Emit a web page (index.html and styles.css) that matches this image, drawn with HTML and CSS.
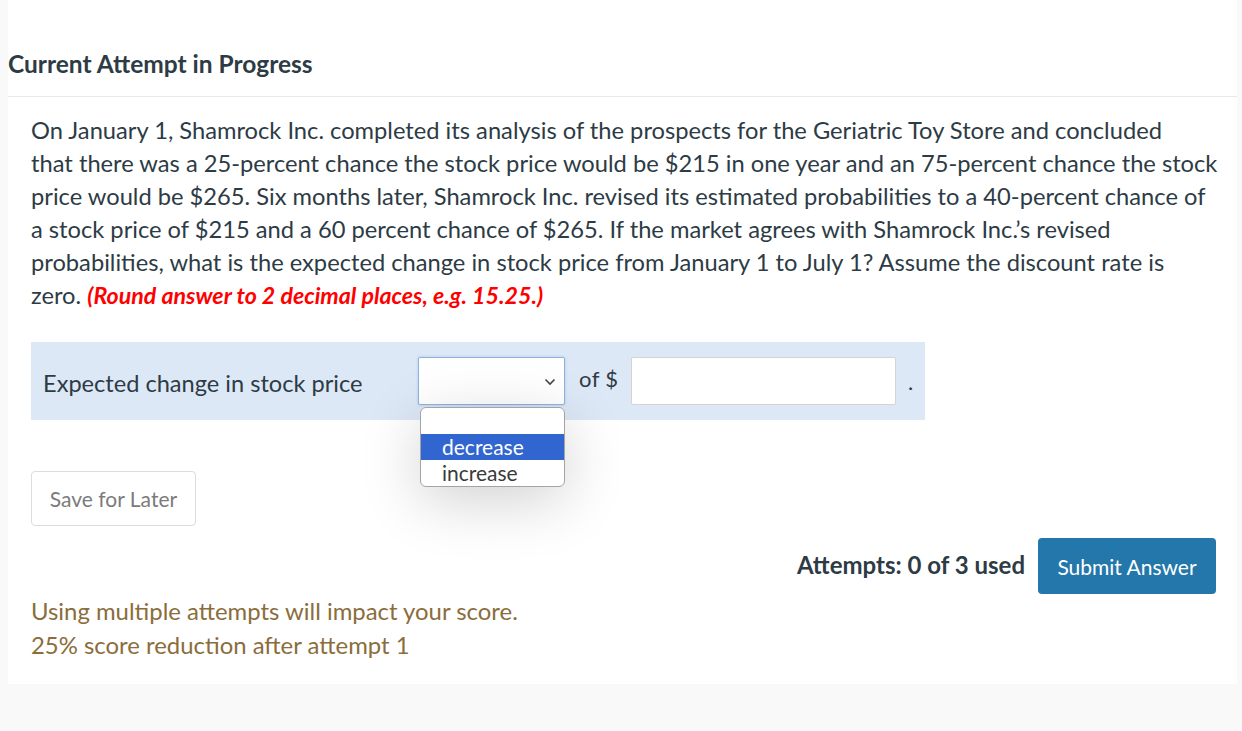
FILE: index.html
```html
<!DOCTYPE html>
<html>
<head>
<meta charset="utf-8">
<link rel="stylesheet" href="styles.css">
</head>
<body>
<div class="card">
  <h2 class="title">Current Attempt in Progress</h2>
  <div class="content">
    <p class="question">On January 1, Shamrock Inc. completed its analysis of the prospects for the Geriatric Toy Store and concluded<br>that there was a 25-percent chance the stock price would be $215 in one year and an 75-percent chance the stock<br>price would be $265. Six months later, Shamrock Inc. revised its estimated probabilities to a 40-percent chance of<br>a stock price of $215 and a 60 percent chance of $265. If the market agrees with Shamrock Inc.’s revised<br>probabilities, what is the expected change in stock price from January 1 to July 1? Assume the discount rate is<br>zero. <span class="hint">(Round answer to 2 decimal places, e.g. 15.25.)</span></p>

    <div class="answer-row">
      <span class="label">Expected change in stock price</span>
      <div class="select-wrap">
        <div class="select">
          <svg class="chev" width="12" height="8" viewBox="0 0 12 8"><path d="M1.5 1.5 L6 6 L10.5 1.5" fill="none" stroke="#444" stroke-width="1.6"/></svg>
        </div>
        <div class="menu">
          <div class="opt"></div>
          <div class="opt sel">decrease</div>
          <div class="opt">increase</div>
        </div>
      </div>
      <span class="of">of $</span>
      <div class="input"></div>
      <span class="dot">.</span>
    </div>

    <button class="save">Save for Later</button>

    <div class="submit-row">
      <span class="attempts">Attempts: 0 of 3 used</span>
      <button class="submit">Submit Answer</button>
    </div>

    <p class="warn">Using multiple attempts will impact your score.<br>25% score reduction after attempt 1</p>
  </div>
</div>
</body>
</html>
```

FILE: styles.css
```css
html, body {
  margin: 0;
  padding: 0;
  background: #f9f9f9;
  font-family: Lato, "Open Sans", sans-serif;
  color: #2d3b45;
}
body {
  padding: 0 5px 0 8px;
  height: 731px;
  box-sizing: border-box;
}
.card {
  background: #fff;
  padding-bottom: 22px;
}
.title {
  margin: 0;
  font-size: 24.5px;
  font-weight: 700;
  line-height: 28px;
  padding: 50px 0 18px 0;
  border-bottom: 1px solid #e8e8e8;
  color: #2d3b45;
}
.content {
  padding: 0 21px 0 23px;
}
.question {
  margin: 0;
  padding-top: 17px;
  font-size: 23.7px;
  line-height: 33px;
  white-space: nowrap;
}
.hint {
  color: #ff0000;
  font-weight: 700;
  font-style: italic;
  font-size: 23.2px;
}
.answer-row {
  margin-top: 30px;
  width: 894px;
  height: 78px;
  box-sizing: border-box;
  background: #dde8f6;
  display: flex;
  align-items: center;
  padding-left: 12px;
  font-size: 22px;
}
.label {
  width: 375px;
  font-size: 23.6px;
  margin-top: 4px;
}
.select-wrap {
  position: relative;
}
.select {
  width: 147px;
  height: 48px;
  box-sizing: border-box;
  background: #fff;
  border: 1px solid #8fb3e0;
  border-radius: 2px;
  box-shadow: 0 0 3px rgba(80, 140, 220, 0.35);
  position: relative;
}
.chev {
  position: absolute;
  right: 8px;
  top: 20px;
}
.menu {
  position: absolute;
  left: 2px;
  top: 50px;
  width: 145px;
  box-sizing: border-box;
  background: #fff;
  border: 1.5px solid #a4a4a4;
  border-radius: 6px;
  overflow: hidden;
  box-shadow: 0 14px 60px rgba(0, 0, 0, 0.18);
  z-index: 2;
}
.opt {
  height: 26px;
  line-height: 26px;
  padding-left: 21px;
  font-size: 21px;
  color: #3a3a3a;
}
.opt.sel {
  background: #3166d0;
  color: #fff;
}
.of {
  margin-left: 14px;
  width: 52px;
  align-self: flex-start;
  margin-top: 22px;
  line-height: 30px;
  letter-spacing: 0.4px;
}
.input {
  width: 265px;
  height: 48px;
  box-sizing: border-box;
  background: #fff;
  border: 1px solid #d4d4d4;
  border-radius: 2px;
}
.dot {
  margin-left: 12px;
}
.save {
  display: block;
  margin-top: 51px;
  width: 165px;
  height: 55px;
  background: #fff;
  border: 1px solid #dcdcdc;
  border-radius: 4px;
  font-family: Lato, sans-serif;
  font-size: 21px;
  color: #7b7b7b;
  padding: 0;
}
.submit-row {
  margin-top: 12px;
  display: flex;
  justify-content: flex-end;
  align-items: center;
  gap: 13px;
}
.attempts {
  font-size: 24px;
  font-weight: 700;
  color: #2d3b45;
  margin-top: -4px;
}
.submit {
  width: 178px;
  height: 56px;
  background: #2477aa;
  color: #fff;
  border: none;
  border-radius: 4px;
  font-family: Lato, sans-serif;
  font-size: 21px;
  padding: 0;
}
.warn {
  margin: 0;
  font-size: 23.9px;
  line-height: 34px;
  color: #8a6d3b;
}
```
